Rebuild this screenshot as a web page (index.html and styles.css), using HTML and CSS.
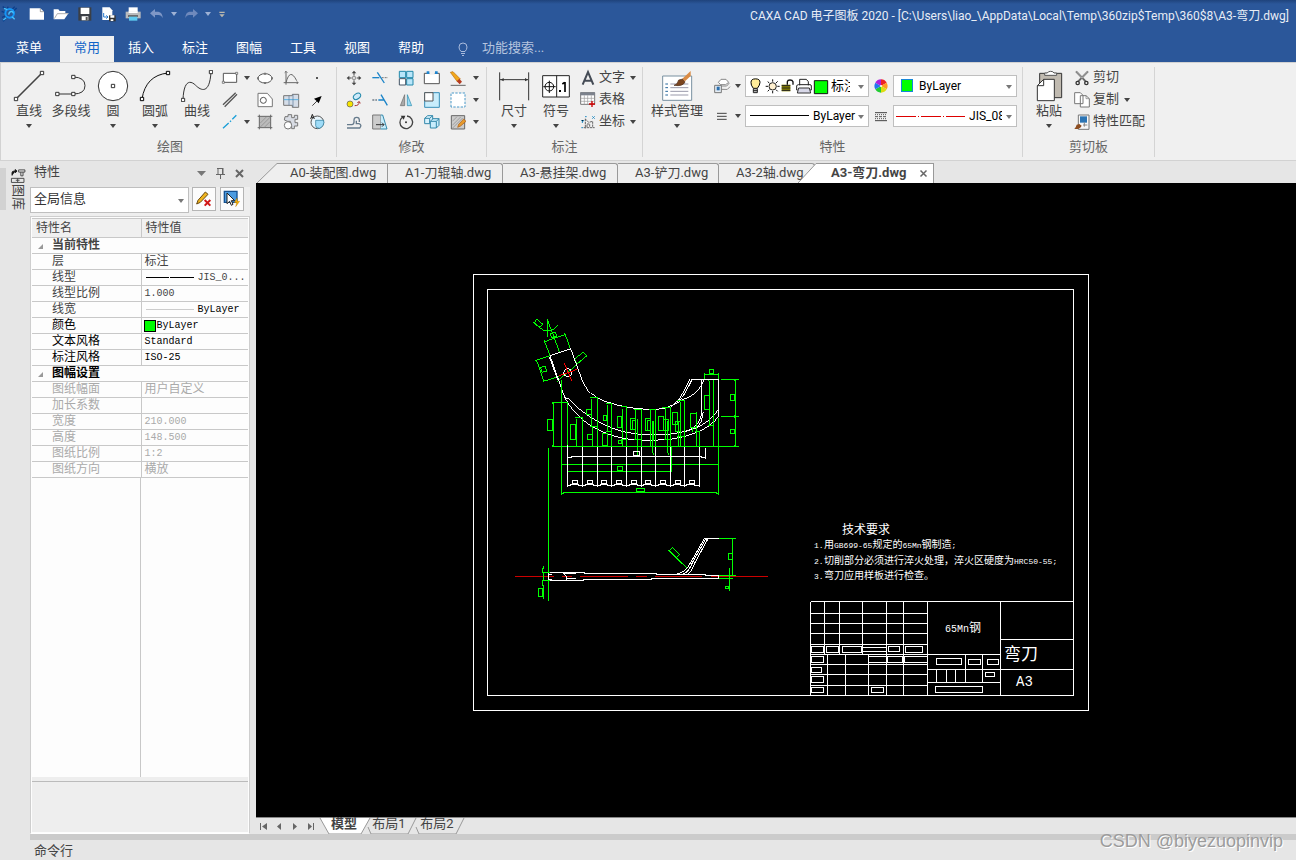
FILE: index.html
```html
<!DOCTYPE html>
<html lang="zh-CN">
<head>
<meta charset="utf-8">
<title>CAXA CAD 电子图板 2020</title>
<link rel="stylesheet" href="styles.css">
</head>
<body>
<header class="header">
  <div class="titlebar">
    <div class="quick">
      <svg class="logo" viewBox="3 15 51 54"><path d="M8 20l14 9M24 20l-3 12M44 20l-8 9M50 24L37 37M5 34l10 4M9 64l12-12M6 52l10-4" stroke="#0a3f8c" stroke-width="4"/><circle cx="29" cy="40" r="13" fill="none" stroke="#1595f5" stroke-width="6"/><path d="M26 44c2-12 12-12 14-4M36 50l8 8M12 25l10 4M10 60l9-7" stroke="#48c4ff" stroke-width="4" fill="none"/></svg>
      <button class="qb" aria-label="新建"><svg class="i18" viewBox="84 15 54 54"><path d="M89 25h32l11 10v24H89z" fill="#fff"/><path d="M121 25v10h11" fill="none" stroke="#777" stroke-width="2"/></svg></button>
      <button class="qb" aria-label="打开"><svg class="i18" viewBox="155 15 54 54"><path d="M160 58V28h14l4 5h17v6h10l-13 19z" fill="#fff"/><path d="M162 56l9-15h32" fill="none" stroke="#888" stroke-width="2"/></svg></button>
      <button class="qb" aria-label="保存"><svg class="i18" viewBox="228 15 54 54"><path d="M235 22h39v40h-39z" fill="#3b3f46"/><path d="M242 23h26v19h-26zM245 49h20v12h-20z" fill="#fff"/><path d="M257 51h6v10h-6z" fill="#555"/></svg></button>
      <button class="qb" aria-label="另存为"><svg class="i18" viewBox="301 15 54 54"><path d="M308 22h22l8 9v29h-30z" fill="#fff"/><path d="M312 39v12h12M320 46l5 5-5 5" stroke="#2a7cd0" stroke-width="3" fill="none"/><path d="M328 46h20v18h-20z" fill="#333"/><path d="M332 46h12v7h-12zM333 58h8v5h-8z" fill="#fff"/></svg></button>
      <button class="qb" aria-label="打印"><svg class="i18" viewBox="372 15 54 54"><path d="M386 22h27v16h-27z" fill="#fff"/><path d="M377 35h45v20h-45z" fill="#b9bbbd"/><path d="M386 34h27v5h-27z" fill="#fff"/><path d="M384 46h30v4h-30z" fill="#444"/><path d="M387 50h25v12h-25z" fill="#5ec9ef"/></svg></button>
      <button class="qb" aria-label="撤销"><svg class="i18" viewBox="444 15 54 54"><path d="M450 40l15-13v8h10q13 2 13 20q-4-10-13-10h-10v8z" fill="#7f97c6"/></svg></button>
      <button class="qa" aria-label="撤销列表"><i class="caret light"></i></button>
      <button class="qb" aria-label="重做"><svg class="i18" viewBox="546 15 54 54"><path d="M594 40l-15-13v8h-11q-12 2-12 20q4-10 12-10h11v8z" fill="#6f89bc"/></svg></button>
      <button class="qa" aria-label="重做列表"><i class="caret light"></i></button>
      <button class="qc" aria-label="自定义"><svg class="i18" viewBox="641 15 54 54"><path d="M660 35h16v4h-16zM660 43h16l-8 9z" fill="#bbb8ad"/></svg></button>
    </div>
    <div class="title">CAXA CAD 电子图板 2020 - [C:\Users\liao_\AppData\Local\Temp\360zip$Temp\360$8\A3-弯刀.dwg]</div>
  </div>
  <nav class="menu">
    <button class="mt first">菜单</button>
    <button class="mt on">常用</button>
    <button class="mt">插入</button>
    <button class="mt">标注</button>
    <button class="mt">图幅</button>
    <button class="mt">工具</button>
    <button class="mt">视图</button>
    <button class="mt">帮助</button>
    <label class="find"><svg class="i14" viewBox="0 0 14 14"><path d="M5 9.500Q3 7.500 3 5a4 4 0 0 1 8 0q0 2.500-2 4.500zM5 11.500h4M6 13.500h2" fill="none" stroke="#a9bbdd"/></svg><input type="text" placeholder="功能搜索..." aria-label="功能搜索"></label>
  </nav>
</header>

<section class="ribbon">
  <div class="group">
    <div class="tools g-draw">
      <button class="big"><svg class="i32" viewBox="39 210 96 96"><path d="M48 297L126 219" stroke="#444" stroke-width="5"/><path d="M43 292h10v10H43zM121 214h10v10h-10z" fill="#fff" stroke="#333" stroke-width="3"/></svg><span>直线</span><i class="caret"></i></button>
      <button class="big"><svg class="i32" viewBox="167 210 96 96"><path d="M174 282H222q35 0 35-25t-35-26" fill="none" stroke="#333" stroke-width="3"/><path d="M169 277h10v10h-10zM217 277h10v10h-10zM217 226h10v10h-10z" fill="#fff" stroke="#333" stroke-width="3"/></svg><span>多段线</span></button>
      <button class="big"><svg class="i32" viewBox="294 210 96 96"><circle cx="342" cy="258" r="44" fill="#fff" stroke="#333" stroke-width="3"/><path d="M337 253h10v10h-10z" fill="#fff" stroke="#333" stroke-width="3"/></svg><span>圆</span><i class="caret"></i></button>
      <button class="big"><svg class="i32" viewBox="420 210 96 96"><path d="M429 297Q440 226 507 219" fill="none" stroke="#111" stroke-width="3"/><path d="M424 292h10v10h-10zM502 214h10v10h-10z" fill="#fff" stroke="#000" stroke-width="3"/></svg><span>圆弧</span><i class="caret"></i></button>
      <button class="big"><svg class="i32" viewBox="546 210 96 96"><path d="M552 300C554 240 574 240 590 256S632 284 636 216" fill="none" stroke="#333" stroke-width="3"/><path d="M547 295h10v10h-10zM631 211h10v10h-10z" fill="#fff" stroke="#333" stroke-width="3"/></svg><span>曲线</span><i class="caret"></i></button>
      <div class="grid4">
        <button aria-label="矩形"><svg class="i18" viewBox="663 207 54 54"><path d="M670 220h40v27h-40z" fill="#fff" stroke="#555" stroke-width="3"/><path d="M667 244h6v6h-6zM707 217h6v6h-6z" fill="#fff" stroke="#555" stroke-width="2"/></svg></button>
        <button aria-label="矩形选项"><i class="caret"></i></button>
        <button aria-label="椭圆"><svg class="i18" viewBox="768 207 54 54"><ellipse cx="795" cy="235" rx="21" ry="14" fill="#fff" stroke="#555" stroke-width="3"/><path d="M771 232h6v6h-6zM813 232h6v6h-6zM792 218h6v6h-6zM792 246h6v6h-6z" fill="#777"/></svg></button>
        <button aria-label="公式曲线"><svg class="i18" viewBox="845 207 54 54"><path d="M857 214v40M850 248h44M857 248q12-46 32-6M853 218l4-4 4 4M889 244l4 4-4 4" fill="none" stroke="#666" stroke-width="3"/></svg></button>
        <button aria-label="点"><svg class="i18" viewBox="924 207 54 54"><path d="M948 231h6v6h-6z" fill="#555"/></svg></button>
        <button aria-label="平行线"><svg class="i18" viewBox="663 273 54 54"><path d="M669 314l38-36M674 320l37-37" stroke="#555" stroke-width="4"/></svg></button>
        <span></span>
        <button aria-label="轮廓"><svg class="i18" viewBox="768 273 54 54"><path d="M774 280h28l15 17v23h-43z" fill="#fff" stroke="#777" stroke-width="3"/><circle cx="790" cy="301" r="9" fill="#fff" stroke="#555" stroke-width="3"/></svg></button>
        <button aria-label="轴"><svg class="i18" viewBox="845 273 54 54"><path d="M850 287h26v-4h19v39h-19v-6h-26z" fill="#d5dde8" stroke="#777" stroke-width="3"/><path d="M850 299h45" stroke="#5ab0e0" stroke-width="3"/><path d="M866 287v29M878 283v38" stroke="#579" stroke-width="2"/></svg></button>
        <button aria-label="箭头"><svg class="i18" viewBox="924 273 54 54"><path d="M937 317l18-18" stroke="#444" stroke-width="3"/><path d="M965 288l-9 22-6-7-8-7z" fill="#000"/></svg></button>
        <button aria-label="中心线"><svg class="i18" viewBox="663 339 54 54"><path d="M669 385l17-16M690 365l3-3M697 358l12-12" stroke="#1a9fd8" stroke-width="4"/></svg></button>
        <button aria-label="中心线选项"><i class="caret"></i></button>
        <button aria-label="剖面线"><svg class="i18" viewBox="768 339 54 54"><path d="M778 349h34v34h-34z" fill="#bbb"/><path d="M778 344v44M812 344v44M773 349h44M773 383h44" stroke="#666" stroke-width="3"/><path d="M780 370l20-20M780 382l31-31M793 382l18-18" stroke="#888" stroke-width="2"/></svg></button>
        <button aria-label="齿轮"><svg class="i18" viewBox="845 339 54 54"><path d="M854 350h9v-6h11v9h8v-7h10v12h-8v10h8v10h-10v8h-8v-8l-4-14h-8l-10-4z" fill="#d8dce4" stroke="#777" stroke-width="3"/><circle cx="863" cy="376" r="11" fill="#fff" stroke="#777" stroke-width="3"/></svg></button>
        <button aria-label="局部放大"><svg class="i18" viewBox="924 339 54 54"><circle cx="952" cy="367" r="19" fill="#e8f5fc" stroke="#555" stroke-width="3"/><path d="M947 361h24a20 20 0 0 1-12 24q-12 0-12-8z" fill="#9fdcf8" stroke="#279" stroke-width="2"/><path d="M932 357l5-14 6 14M934 352h7" fill="none" stroke="#222" stroke-width="3"/></svg></button>
      </div>
    </div>
    <div class="gl">绘图</div>
  </div>

  <div class="group">
    <div class="tools">
      <div class="grid6">
        <button aria-label="平移"><svg class="i18" viewBox="45 27 54 54"><path d="M72 32l7 8H65zM72 76l7-8H65zM50 54l8-7v14zM94 54l-8-7v14z" fill="#444"/><path d="M72 38v9M72 61v8M57 54h8M80 54h8" stroke="#444" stroke-width="3"/><path d="M68 50h8v8h-8z" fill="#fff" stroke="#555" stroke-width="2"/></svg></button>
        <button aria-label="裁剪"><svg class="i18" viewBox="123 27 54 54"><path d="M127 53h21" stroke="#1b84c8" stroke-width="4"/><path d="M155 53h19" stroke="#777" stroke-width="3" stroke-dasharray="6 3"/><path d="M142 37l21 32" stroke="#1b84c8" stroke-width="4"/></svg></button>
        <button aria-label="阵列"><svg class="i18" viewBox="201 27 54 54"><path d="M208 34h19v19h-19zM230 34h19v19h-19zM230 56h19v19h-19z" fill="#b9e6fa" stroke="#28a" stroke-width="3"/><path d="M208 56h19v19h-19z" fill="#fff" stroke="#456" stroke-width="3"/></svg></button>
        <button aria-label="拉伸"><svg class="i18" viewBox="279 27 54 54"><path d="M283 40h45v31h-45z" fill="#fff" stroke="#555" stroke-width="3"/><path d="M298 36h16v8h-16z" fill="#f0f0f0"/><path d="M290 34h8v8h-8zM315 34h8v8h-8z" fill="#1c84cf"/></svg></button>
        <button aria-label="删除"><svg class="i18" viewBox="357 27 54 54"><path d="M361 37l8-2 22 22-9 8z" fill="#f2a71b" stroke="#b96d0a" stroke-width="2"/><path d="M388 56l8 9-7 8-9-9z" fill="#b43c22"/><path d="M362 76h45" stroke="#666" stroke-width="3"/></svg></button>
        <button aria-label="删除选项"><i class="caret"></i></button>
        <button aria-label="平移复制"><svg class="i18" viewBox="45 93 54 54"><circle cx="60" cy="132" r="9" fill="#f7e400" stroke="#555" stroke-width="2"/><ellipse cx="81" cy="109" rx="12" ry="8" transform="rotate(-35 81 109)" fill="#cdeafa" stroke="#28a" stroke-width="3"/><path d="M74 137q14 0 13-11M82 129l5-5 4 6" fill="none" stroke="#a33" stroke-width="3"/></svg></button>
        <button aria-label="延伸"><svg class="i18" viewBox="123 93 54 54"><path d="M127 120h14" stroke="#345" stroke-width="3" stroke-dasharray="6 3"/><path d="M153 104l19 32M145 120h17" stroke="#1b84c8" stroke-width="4"/></svg></button>
        <button aria-label="镜像"><svg class="i18" viewBox="201 93 54 54"><path d="M224 104v33h-13z" fill="#aaa" stroke="#666" stroke-width="2"/><path d="M232 104v33h13z" fill="#9bdcf7" stroke="#28a" stroke-width="2"/></svg></button>
        <button aria-label="缩放"><svg class="i18" viewBox="279 93 54 54"><path d="M284 98h44v44h-44z" fill="#c8edfc" stroke="#388eb8" stroke-width="3"/><path d="M284 98h25v25h-25z" fill="#fff" stroke="#555" stroke-width="3"/></svg></button>
        <button aria-label="打断"><svg class="i18" viewBox="357 93 54 54"><path d="M363 99h42v42h-42z" fill="#fff"/><path d="M363 141V99h42v42z" fill="none" stroke="#4898c8" stroke-width="3" stroke-dasharray="7 4"/></svg></button>
        <button aria-label="打断选项"><i class="caret"></i></button>
        <button aria-label="等距线"><svg class="i18" viewBox="45 159 54 54"><path d="M51 194h14q7-1 7-8v-6q0-8 8-8t8 8v6M51 204h38q8-9-2-13h-8v-9" fill="none" stroke="#667b8c" stroke-width="4"/></svg></button>
        <button aria-label="拉伸区域"><svg class="i18" viewBox="123 159 54 54"><path d="M128 165h24v42h-24z" fill="#ccc" stroke="#777" stroke-width="3"/><path d="M152 165h6l13 42h-19" fill="#c8edfc" stroke="#38a" stroke-width="3"/><path d="M138 194h24M156 188l6 6-6 6" fill="none" stroke="#333" stroke-width="3"/></svg></button>
        <button aria-label="旋转"><svg class="i18" viewBox="201 159 54 54"><path d="M231 168a19 19 0 1 1-14 4" fill="none" stroke="#444" stroke-width="4"/><path d="M212 167l14 0-5 12z" fill="#333"/><circle cx="228" cy="187" r="3" fill="#333"/></svg></button>
        <button aria-label="三维"><svg class="i18" viewBox="279 159 54 54"><path d="M284 175l9-8h15v16l-9 8h-15zM284 175h15v16M299 175l9-8" fill="#d9f2fd" stroke="#38a" stroke-width="3"/><path d="M301 184l8-8h18v20l-8 8h-18zM301 184h18v20M319 184l8-8" fill="#c8edfc" stroke="#38a" stroke-width="3"/></svg></button>
        <button aria-label="填充编辑"><svg class="i18" viewBox="357 159 54 54"><path d="M364 167h40v40h-40z" fill="#ccc" stroke="#666" stroke-width="3"/><path d="M367 184l14-14M367 196l25-25M368 204l30-30" stroke="#888" stroke-width="2"/><path d="M383 202l3-9 15-16 7 7-16 14z" fill="#e69a2b" stroke="#a65b1b" stroke-width="2"/></svg></button>
        <button aria-label="填充选项"><i class="caret"></i></button>
      </div>
    </div>
    <div class="gl">修改</div>
  </div>

  <div class="group">
    <div class="tools g-dim">
      <button class="big"><svg class="i32" viewBox="504 29 96 96"><path d="M509 36v84M596 36v84M510 58h84" stroke="#333" stroke-width="3"/><path d="M512 58l9-5v10zM594 58l-9-5v10z" fill="#333"/></svg><span>尺寸</span><i class="caret"></i></button>
      <button class="big"><svg class="i32" viewBox="630 29 96 96"><path d="M638 46h80v64h-80zM680 46v64" fill="#fff" stroke="#222" stroke-width="3"/><circle cx="658" cy="79" r="13" fill="none" stroke="#111" stroke-width="3"/><path d="M640 79h37M658 61v37" stroke="#111" stroke-width="3"/><path d="M687 89h6v6h-6z"/><path d="M705 65v30M697 71l7-5" stroke="#000" stroke-width="5"/></svg><span>符号</span><i class="caret"></i></button>
      <div class="list">
        <button><svg class="i18" viewBox="747 27 54 54"><path d="M758 74l16-38 16 38M763 62h22" fill="none" stroke="#444b55" stroke-width="6"/></svg><span>文字</span><i class="caret"></i></button>
        <button><svg class="i18" viewBox="747 93 54 54"><path d="M752 98h42v35h-42z" fill="#fff" stroke="#777" stroke-width="3"/><path d="M751 97h44v9h-44z" fill="#7c828c"/><path d="M752 115h42M752 124h42M763 106v27M773 106v27M784 106v27" stroke="#999" stroke-width="2"/><path d="M786 123v18M777 132h18" stroke="#c00" stroke-width="4"/></svg><span>表格</span></button>
        <button><svg class="i18" viewBox="747 159 54 54"><path d="M766 176v29M761 203h33M766 177l10 10 12-3v19M771 201v-9h8v8" fill="none" stroke="#666" stroke-width="3" stroke-dasharray="7 2"/><path d="M754 180l4 5 4-5M757 184v5M765 170h5M787 169l7 7M794 169l-7 7M754 203h5" stroke="#248bc2" stroke-width="3"/></svg><span>坐标</span><i class="caret"></i></button>
      </div>
    </div>
    <div class="gl">标注</div>
  </div>

  <div class="group">
    <div class="tools g-prop">
      <button class="big wide"><svg class="i32" viewBox="63 28 96 96"><path d="M68 46h87v73H68z" fill="#fff" stroke="#7890a0" stroke-width="3"/><path d="M76 70h8M76 81h8M76 92h8M76 103h8" stroke="#28689c" stroke-width="3"/><path d="M91 70h54M91 81h54M91 92h54M91 103h54" stroke="#99a" stroke-width="3"/><path d="M102 74q10-1 14-16l13-3 6 9q-6 14-33 10z" fill="#7b451f" stroke="#4b2b17" stroke-width="2"/><path d="M127 54l25-23v15l-17 16z" fill="#d98b45"/></svg><span>样式管理</span><i class="caret"></i></button>
      <div class="props">
        <button aria-label="图层"><svg class="i18" viewBox="219 53 54 54"><path d="M235 69l8-9h15l8 9-9 7h-15zM238 80h22l8-9M244 90h18l8-8" fill="#fff" stroke="#888" stroke-width="3"/><path d="M224 78h20v22h-20z" fill="#e7eef5" stroke="#777" stroke-width="3"/><path d="M230 82h9v11h-9z" fill="#2b6fad"/></svg></button>
        <button aria-label="图层选项"><i class="caret"></i></button>
        <div class="combo">
          <select class="c-layer" aria-label="图层"><option>标注</option></select>
          <svg class="layericons" viewBox="330 53 237 54"><path d="M340 87q-8-10-7-18a13 10 0 0 1 27 0q0 8-8 18z" fill="#ffec9a" stroke="#000" stroke-width="3"/><path d="M340 88h12v12h-12z" fill="#ccc" stroke="#222" stroke-width="3"/><path d="M340 94h12" stroke="#222" stroke-width="3"/><circle cx="398" cy="81" r="11" fill="#fff0cf" stroke="#222" stroke-width="3"/><path d="M398 60v7M398 95v7M377 81h7M412 81h7M383 67l5 4M408 71l5-5M388 91l-5 5M408 91l5 5" stroke="#111" stroke-width="3"/><path d="M425 76h26v20h-26z" fill="#8c8500"/><path d="M425 79h26M425 86h26M425 93h26" stroke="#222" stroke-width="3"/><path d="M442 76v-9q1-5 8-5t9 5v9" fill="none" stroke="#111" stroke-width="4"/><path d="M479 78V60h20l6 7v11M473 92h-3V80q1-4 5-4h35q4 0 4 4v12h-4" fill="#fff" stroke="#222" stroke-width="3"/><path d="M476 86h32l4 15h-40z" fill="#d8d8e8" stroke="#333" stroke-width="3"/><path d="M523 64h40v39h-40z" fill="#0f0" stroke="#111" stroke-width="3"/></svg>
          <i class="caret mid"></i>
        </div>
        <button aria-label="颜色"><svg class="i18" viewBox="693 53 54 54"><path d="M720 80V60a20 20 0 0 1 17 10z" fill="#e22"/><path d="M720 80l17-10a20 20 0 0 1 0 20z" fill="#f92"/><path d="M720 80l17 10a20 20 0 0 1-17 10z" fill="#dd1"/><path d="M720 80v20a20 20 0 0 1-17-10z" fill="#2c3"/><path d="M720 80l-17 10a20 20 0 0 1 0-20z" fill="#27e"/><path d="M720 80l-17-10a20 20 0 0 1 17-10z" fill="#a2d"/><circle cx="720" cy="80" r="3" fill="#fff"/></svg></button>
        <div class="combo"><select class="c-color" aria-label="颜色"><option>ByLayer</option></select><i class="chip"></i><i class="caret mid"></i></div>
        <button aria-label="线宽"><svg class="i18" viewBox="219 143 54 54"><path d="M231 162h29M231 171h29M231 180h29" stroke="#444" stroke-width="3"/></svg></button>
        <button aria-label="线宽选项"><i class="caret"></i></button>
        <div class="combo"><select class="c-width" aria-label="线宽"><option>ByLayer</option></select><i class="line"></i><i class="caret mid"></i></div>
        <button aria-label="线型"><svg class="i18" viewBox="693 143 54 54"><path d="M702 160h36M702 184h36" stroke="#444" stroke-width="3"/><path d="M702 166h36M702 178h36" stroke="#555" stroke-width="3" stroke-dasharray="3 3"/><path d="M702 172h36" stroke="#555" stroke-width="3" stroke-dasharray="9 3"/></svg></button>
        <div class="combo"><select class="c-type" aria-label="线型"><option>JIS_08_15</option></select><svg class="redline" viewBox="0 0 72 3"><path d="M1 1.500h20M23 1.500h1M26 1.500h20M48 1.500h1M51 1.500h19" stroke="#d00"/></svg><i class="caret mid"></i></div>
      </div>
    </div>
    <div class="gl">特性</div>
  </div>

  <div class="group">
    <div class="tools g-clip">
      <button class="big"><svg class="i32" viewBox="1179 29 96 96"><path d="M1199 39h66v73h-66z" fill="#c0bab0" stroke="#333" stroke-width="3"/><path d="M1214 45v-7h8q2-5 10-5t10 5h8v7z" fill="#fff" stroke="#555" stroke-width="3"/><path d="M1192 121V76l19-19h32v64z" fill="#fff" stroke="#333" stroke-width="3"/><path d="M1192 76h19V57" fill="none" stroke="#333" stroke-width="3"/></svg><span>粘贴</span><i class="caret"></i></button>
      <div class="list">
        <button><svg class="i18" viewBox="1299 27 54 54"><path d="M1308 34l29 30M1344 34l-30 31" stroke="#666" stroke-width="6"/><path d="M1308 34l20 21M1344 34l-20 21" stroke="#ddd" stroke-width="2"/><circle cx="1313" cy="69" r="5" fill="none" stroke="#333" stroke-width="4"/><circle cx="1339" cy="69" r="5" fill="none" stroke="#333" stroke-width="4"/></svg><span>剪切</span></button>
        <button><svg class="i18" viewBox="1299 93 54 54"><path d="M1304 98h17l8 8v25h-25zM1321 107h17l10 9v25h-27z" fill="#fff" stroke="#777" stroke-width="3"/><path d="M1338 107v9h10" fill="none" stroke="#777" stroke-width="2"/></svg><span>复制</span><i class="caret"></i></button>
        <button><svg class="i18" viewBox="1299 159 54 54"><path d="M1315 165h32v43h-32z" fill="#f8f8f8" stroke="#777" stroke-width="3"/><path d="M1320 169h21v19h-21z" fill="#2c75b4"/><path d="M1333 187v13M1329 195h13" stroke="#888" stroke-width="3"/><path d="M1303 207q5-5 7-13l8-2 7 5q-5 12-22 10z" fill="#8d4d20"/></svg><span>特性匹配</span></button>
      </div>
    </div>
    <div class="gl">剪切板</div>
  </div>
</section>

<main class="main">
  <aside class="dock">
    <div class="docktab"></div>
    <button class="lib"><svg class="i16" viewBox="28 24 48 51"><path d="M33 48v-9q0-5 6-5h5M43 29l6 5-6 5z" fill="#111" stroke="#111" stroke-width="3"/><path d="M54 30h20v7H54zM61 37v12h7V37M31 57h40v13H31zM45 63h12M51 57v13" fill="none" stroke="#444" stroke-width="3"/></svg><span>图库</span></button>
  </aside>
  <div class="work">
    <div class="upper">
      <aside class="panel">
        <div class="ptitle"><h2>特性</h2>
          <button aria-label="菜单"><svg class="i16" viewBox="0 0 16 16"><path d="M4 6h9L8.500 11z" fill="#777"/></svg></button>
          <button aria-label="固定"><svg class="i16" viewBox="0 0 16 16"><path d="M6 3v6M11 3v6M5 3.500h6M4 9.500h9M8.500 10v4M10.500 3v6" fill="none" stroke="#666"/></svg></button>
          <button aria-label="关闭"><svg class="i16" viewBox="0 0 16 16"><path d="M5 5l7 7M12 5l-7 7" stroke="#666" stroke-width="2"/></svg></button>
        </div>
        <div class="pcombo">
          <div class="combo"><select class="c-info" aria-label="对象"><option>全局信息</option></select><i class="caret mid"></i></div>
          <button class="pb" aria-label="清除"><svg class="i18" viewBox="585 90 54 54"><path d="M590 132l4-11 22-25 8 7-23 24z" fill="#f0b41c" stroke="#664710" stroke-width="3"/><path d="M614 120l17 17M631 120l-17 17" stroke="#d01515" stroke-width="6"/></svg></button>
          <button class="pb" aria-label="快速选择"><svg class="i18" viewBox="669 90 54 54"><path d="M673 94h38v33h-38z" fill="#4b9be0" stroke="#165292" stroke-width="4"/><path d="M681 99v32l8-7 5 12 5-3-5-11h10z" fill="#fff" stroke="#222" stroke-width="3"/><path d="M711 114l-8 14h7l-3 12 12-16h-7z" fill="#f9b000" stroke="#a86a00" stroke-width="1"/></svg></button>
        </div>
        <div class="pgrid">
          <table>
            <thead><tr><th>特性名</th><th>特性值</th></tr></thead>
            <tbody>
              <tr class="sec"><td colspan="2"><i class="tri"></i>当前特性</td></tr>
              <tr><td>层</td><td>标注</td></tr>
              <tr><td>线型</td><td><span class="val"><i class="dash"></i><span class="mono">JIS_0...</span></span></td></tr>
              <tr><td>线型比例</td><td class="mono">1.000</td></tr>
              <tr><td>线宽</td><td><span class="val"><i class="thin"></i><span class="mono blk">ByLayer</span></span></td></tr>
              <tr class="blk"><td>颜色</td><td><span class="val col"><i class="sw"></i><span class="mono">ByLayer</span></span></td></tr>
              <tr class="blk"><td>文本风格</td><td class="mono">Standard</td></tr>
              <tr class="blk"><td>标注风格</td><td class="mono">ISO-25</td></tr>
              <tr class="sec blk"><td colspan="2"><i class="tri"></i>图幅设置</td></tr>
              <tr class="dim"><td>图纸幅面</td><td>用户自定义</td></tr>
              <tr class="dim"><td>加长系数</td><td></td></tr>
              <tr class="dim"><td>宽度</td><td class="mono">210.000</td></tr>
              <tr class="dim"><td>高度</td><td class="mono">148.500</td></tr>
              <tr class="dim"><td>图纸比例</td><td class="mono">1:2</td></tr>
              <tr class="dim"><td>图纸方向</td><td>横放</td></tr>
            </tbody>
          </table>
          <div class="rest"><span></span></div>
          <div class="desc"></div>
        </div>
      </aside>
      <section class="view">
        <div class="doctabs">
          <button class="dt d1"><svg class="slant" viewBox="0 0 22 20"><path d="M0 20L20 0.500H22V20z" fill="#efefef"/><path d="M0 20L20 .5H22" fill="none" stroke="#999"/></svg>A0-装配图.dwg</button>
          <button class="dt d2">A1-刀辊轴.dwg</button>
          <button class="dt d3">A3-悬挂架.dwg</button>
          <button class="dt d4">A3-铲刀.dwg</button>
          <button class="dt d5">A3-2轴.dwg</button>
          <button class="dt d6"><svg class="slant" viewBox="0 0 22 20"><path d="M0 20L18 0.500H22V20z" fill="#fff"/><path d="M0 20L18 .5H22" fill="none" stroke="#999"/></svg><b>A3-弯刀.dwg</b><svg class="x" viewBox="0 0 9 9"><path d="M1.500 1.500l6 6M7.500 1.500l-6 6" stroke="#666" stroke-width="1.500"/></svg></button>
        </div>
        <svg class="cad" viewBox="256 183 1040 634" fill="none" role="img" aria-label="弯刀图纸">
          <g stroke="#fff" shape-rendering="crispEdges"><path d="M473.500 274.500h615v436h-615zM487.500 289.500h586v406h-586z"/></g>
          <g transform="translate(520 310) scale(.33333)" stroke-width="3" shape-rendering="crispEdges">
            <path stroke="#0f0" d="M74 95L135 74M72 90L90 137M134 68L150 114M103 84L118 126M38 37L72 62H95L113 46M82 28V80M84 34L103 84M50 28L68 42L60 52L43 38zM90 72l15-6 5 12-15 6zM50 152L72 214M46 152L90 137M70 214L116 200M62 172l13-4 5 15-14 4zM112 214L202 136M163 148L190 126L200 138L172 160zM163 148l8 16"/>
            <path stroke="#fff" d="M90 137L152 116L188 215C205 250 235 270 275 280C320 295 390 302 428 296C450 290 470 280 490 268C520 258 540 240 553 208M90 137L124 234L134 262C170 330 230 365 300 383C340 392 400 392 450 388C500 380 560 365 596 320M134 262L148 268C180 305 240 345 300 362C350 376 400 376 450 372C510 365 560 350 596 297M545 310C540 340 525 355 490 366M550 305l-6 30-15 20M510 208L480 265L453 290M518 208L487 262L470 278M512 214l-22 44"/>
            <path d="M89 140L114 208" stroke="#fff" stroke-width="5"/>
            <circle cx="143" cy="188" r="12" stroke="#fff"/>
            <path d="M133 160L155 212M118 197L172 178" stroke="#f00"/>
          </g>
          <g transform="translate(520.5 310.5)" shape-rendering="crispEdges">
            <path stroke="#0f0" d="M41 69V184M28 137V290M31 136H218M31 92H47V136M32 92l1 2V134l-1 2M27 109h5v11h-5zM50 114h5v15h-5zM54 107H62V136M56 108V136M69 87H77V136M71 88V115M69 116H77M72 116V136M66 99h5v5h-5zM67 124h5v5h-5zM83 105h3v5h-3zM85 93H91V136M87 94V120M85 121H91M87 122V136M82 123h5v12h-5z"/>
            <path stroke="#0f0" d="M100 96H106V136M102 98V127M100 129H106M102 129V136M97 106h4v11h-4zM98 130h3v3h-3zM113 99H121V136M115 99V129M110 108h5v11h-5zM112 110h3v9h-3zM117 108V145M113 129h8M128 99H135V136M130 99V136M125 108h5v12h-5zM127 110h3v10h-3zM132 110V140l1 5M133 110v20M141 97H150V162M145 97V129M138 106h5v14h-5zM143 109h5v11h-5zM147 110V140l1 5M143 129h7"/>
            <path stroke="#0f0" d="M156 90H164V136M160 91V136M152 102h5v12h-5zM155 111h5v10h-5zM158 110V136M156 126h8M170 103h6v14h-6zM176 101V136M174 121H179V136M172 117v4M184 85h5v14h-5zM187 69l2 2V115M193 69V136M187 115H193M184 64H198M184 62V69M198 62V69M189 59h4v4h-4zM200 69H218M200 106H218M214 69l1 2V104l-1 2 1 2V134l-1 2M210 84h4v6h-4zM210 119h4v4h-4zM198 107V184M41 154H198M47 161H151V136M41 183h2v-1H196v1h2M97 156h5v4h-5zM116 178h8v3h-8z"/>
            <path stroke="#fff" d="M170 69H198V106M181 69V104M47 134V176M62 136V176M77 136V176M91 136V176M106 136V176M121 136V176M135 136V176M150 136V176M164 136V176M179 136V176M47 147h4v-1H181v1h4M185 137V148M113 141h6v4h-6zM47 175h3v-1h8v1h7v-1h8v1h7v-1h7v1h7v-1h8v1h7v-1h8v1h6v-1h8v1h7v-1h8v1h7v-1h7v1h6v-1h8v1h4M52 170h5v3h-5zM67 170h5v3h-5zM81 170h5v3h-5zM96 170h5v3h-5zM111 170h5v3h-5zM125 170h5v3h-5zM140 170h5v3h-5zM155 170h5v3h-5zM169 170h5v3h-5z"/>
          </g>
          <g transform="translate(505.5 525.5)" shape-rendering="crispEdges">
            <path d="M9 51H48M56 51h10M74 51H122M130 51h11M149 51H196M205 51H262" stroke="#c00"/>
            <path d="M43 47H79V48H151V49H200V50H213V53H146V54H78V55H43zM43 49h3M43 54h3M57 48H70M59 49l2 2v3M61 53H70l1 1M170 49Q180 47 184 39L199 13M177 49Q183 47 187 37L200 14M182 49Q187 45 189 38L202 14H199M199 13H213" stroke="#fff"/>
            <path d="M213 13H230M227 13V50M223 28h4v6h-4zM213 50H230M213 53H227M224 42V65M220 61h3v2h-3zM163 25L182 43M167 22L174 29L171 32L164 25zM38 40V43h-1V47M36 47H44M36 55H44M38 47V55M37 55V60h1V73M33 63h4v8h-4z" stroke="#0f0"/>
          </g>
          <g transform="translate(800.5 515.5)" stroke="#fff" shape-rendering="crispEdges">
            <path d="M10 86H273M10 86V180M24 86V139M39 86V139M62 86V139M86 86V180M103 86V180M127 86V180M200 86V180M10 98H127M10 108H127M10 118H127M10 129H127M10 139H200M27 139V180M45 139V180M68 139V180M10 149H127M10 159H127M10 170H127M127 154H200M127 167H200M165 139V167M182 139V167M136 154V167M146 154V167M155 154V167M200 124H273M200 154H273"/>
            <path d="M11 131h12v6H11zM26 131h12v6H26zM42 131h19v6H42zM62 132h24v4H62zM88 131h11v5H88zM105 131h17v6h-17zM11 141h12v6H11zM68 141h18v6H68zM87 141h15v6H87zM104 141h23v6h-23zM11 152h10v5H11zM11 161h12v6H11zM11 172h12v5H11zM71 172h12v5H71zM136 143h25v6h-25zM168 144h12v5h-12zM187 144h11v5h-11zM185 157h9v4h-9zM135 171h47v6h-47z"/>
          </g>
          <g class="cadtext">
            <text x="842" y="534" class="t12">技术要求</text>
            <text x="814" y="548"><tspan class="m">1.</tspan><tspan x="824">用</tspan><tspan class="m">GB699-65</tspan>规定的<tspan class="m">65Mn</tspan>钢制造<tspan class="m">;</tspan></text>
            <text x="814" y="564"><tspan class="m">2.</tspan><tspan x="824">切削部分必须进行淬火处理，淬火区硬度为</tspan><tspan class="m">HRC50-55;</tspan></text>
            <text x="814" y="579"><tspan class="m">3.</tspan><tspan x="824">弯刀应用样板进行检查。</tspan></text>
            <text x="945" y="632" class="t12"><tspan class="m10">65Mn</tspan>钢</text>
            <text x="1004" y="660" class="t17">弯刀</text>
            <text x="1016" y="686" class="m14">A3</text>
          </g>
        </svg>
        <div class="sheets">
          <button class="nav" aria-label="首页"><svg class="i16" viewBox="0 0 16 16"><path d="M4 5h1v7H4zM11 5v7L6 8.500z" fill="#666"/></svg></button>
          <button class="nav" aria-label="上一页"><svg class="i16" viewBox="0 0 16 16"><path d="M9 5v7L5 8.500z" fill="#666"/></svg></button>
          <button class="nav" aria-label="下一页"><svg class="i16" viewBox="0 0 16 16"><path d="M5 5v7l4-3.500z" fill="#666"/></svg></button>
          <button class="nav" aria-label="末页"><svg class="i16" viewBox="0 0 16 16"><path d="M4 5v7l4-3.500zM9 5h1v7H9z" fill="#666"/></svg></button>
          <button class="st"><svg viewBox="0 0 50 17"><path d="M0 0L9 16H41L50 0" fill="#fff" stroke="#999"/></svg><b>模型</b></button>
          <button class="st s2"><svg viewBox="0 0 50 17"><path d="M3 9L6 16H43L51 0" fill="none" stroke="#999"/></svg><span>布局1</span></button>
          <button class="st"><svg viewBox="0 0 50 17"><path d="M3 9L6 16H43L51 0" fill="none" stroke="#999"/></svg><span>布局2</span></button>
        </div>
      </section>
    </div>
    <footer class="cmd"><span>命令行</span><span class="mark">CSDN @biyezuopinvip</span></footer>
  </div>
</main>
</body>
</html>
```
FILE: styles.css
```css
* { box-sizing: border-box; }
body {
  margin: 0;
  height: 100vh;
  display: flex;
  flex-direction: column;
  background: #e6e6e6;
  color: #444;
  font: 13px/16px Roboto, "Noto Sans CJK SC", sans-serif;
  overflow: hidden;
}
button {
  margin: 0;
  padding: 0;
  border: 0;
  background: none;
  color: inherit;
  font: inherit;
  white-space: nowrap;
}
svg { display: block; flex: none; }
select, input { font: inherit; color: #000; margin: 0; border-radius: 0; }
.i14 { width: 14px; height: 14px; }
.i16 { width: 16px; height: 16px; }
.i18 { width: 18px; height: 18px; }
.i32 { width: 32px; height: 32px; }
.caret {
  display: block;
  flex: none;
  width: 6px;
  height: 4px;
  background: #444;
  clip-path: polygon(0 0, 100% 0, 50% 100%);
}
.caret.light { background: #9fb2d5; }

.header {
  background: linear-gradient(#1f437c, #2b579a 4px);
  color: #fff;
}
.titlebar { display: flex; justify-content: space-between; height: 36px; }
.quick { display: flex; align-items: center; height: 28px; }
.logo { width: 17px; height: 18px; margin: 0 7px 0 1px; }
.qb { width: 24px; height: 24px; display: grid; place-items: center; }
.qa, .qc { width: 10px; height: 24px; display: grid; place-items: center; }
.qc { width: 18px; }
.title { font-size: 12px; line-height: 32px; padding-right: 7px; white-space: nowrap; color: #e8edf6; }
.menu { display: flex; height: 26px; }
.mt { width: 54px; padding-bottom: 3px; }
.mt.first { width: 58px; margin-right: 2px; }
.mt.on { background: #f0f0f0; color: #1065c8; }
.find { display: flex; align-items: center; gap: 12px; margin-left: 18px; }
.find input { width: 120px; padding: 0 0 2px; border: 0; background: none; color: #fff; }
.find input::placeholder { color: #b5c4df; opacity: 1; }

.ribbon {
  display: flex;
  padding: 4px 0 3px 3px;
  background: #f0f0f0;
  border: 1px solid #d2d2d2;
  border-width: 1px 0 1px 1px;
}
.group {
  display: flex;
  flex-direction: column;
  padding: 0 4px;
  border-right: 1px solid #d4d4d4;
}
.tools { display: flex; height: 70px; }
.gl { text-align: center; line-height: 20px; color: #666; }
.big {
  width: 42px;
  display: flex;
  flex-direction: column;
  align-items: center;
  padding-top: 3px;
}
.big.wide { width: 60px; }
.big span { margin: 1px 0 5px; }
.grid4 button, .grid6 button, .props button { display: grid; place-items: center; }
.grid4 {
  display: grid;
  grid-template-columns: 24px 10px 26px 26px 26px;
  grid-auto-rows: 22px;
  margin-right: 2px;
}
.grid6 {
  display: grid;
  grid-template-columns: repeat(5, 26px) 10px;
  grid-auto-rows: 22px;
  margin-right: 1px;
}
.g-dim { padding: 0 2px; }
.list { display: grid; grid-auto-rows: 22px; margin-left: 2px; justify-content: start; }
.list button { display: flex; align-items: center; }
.list span { margin: 0 5px 0 2px; padding-bottom: 2px; }
.g-prop .big { margin-right: 6px; }
.props {
  display: grid;
  grid-template-columns: 18px 14px 124px 24px 124px;
  grid-auto-rows: 30px;
  align-items: center;
  margin: 4px 1px 0 0;
}
.combo { position: relative; }
.combo select {
  appearance: none;
  display: block;
  width: 100%;
  height: 22px;
  padding: 0 16px 0 8px;
  border: 1px solid #bfbfbf;
  background: #fff;
  font-size: 12px;
}
.combo .mid { position: absolute; right: 5px; top: 50%; margin-top: -1px; background: #777; }
.combo .c-layer { padding-left: 85px; padding-right: 18px; font-size: 13px; text-overflow: clip; }
.combo .c-color { padding-left: 25px; }
.combo .c-width { padding-left: 67px; padding-right: 12px; }
.combo .c-type { padding-left: 75px; padding-right: 14px; }
.layericons { position: absolute; left: 5px; top: 2px; width: 79px; height: 18px; }
.chip { position: absolute; left: 8px; top: 4px; width: 12px; height: 13px; background: #0f0; border: 1px solid #1686d9; }
.line { position: absolute; left: 5px; top: 10px; width: 59px; height: 1px; background: #000; }
.redline { position: absolute; left: 2px; top: 10px; width: 72px; height: 3px; }
.g-clip { padding-left: 1px; }
.g-clip .list { margin-left: 3px; }

.main { flex: 1; display: flex; min-height: 0; }
.dock { width: 30px; display: flex; align-items: flex-start; gap: 4px; padding-top: 7px; }
.docktab { width: 6px; height: 42px; background: #d2d2d2; }
.lib { display: flex; flex-direction: column; align-items: center; }
.lib span { writing-mode: vertical-rl; text-orientation: sideways; line-height: 14px; }
.work { flex: 1; display: flex; flex-direction: column; min-width: 0; }
.upper { flex: 1; display: flex; min-height: 0; }
.panel {
  width: 220px;
  display: flex;
  flex-direction: column;
  margin-right: 6px;
}
.ptitle { display: flex; align-items: center; height: 26px; padding: 0 2px 3px 4px; }
.ptitle h2 { margin: 0 auto 0 0; padding-bottom: 2px; font: inherit; }
.ptitle button { width: 19px; display: grid; place-items: center; }
.pcombo { display: flex; gap: 3px; height: 29px; align-items: flex-start; background: #eee; }
.pcombo .combo { width: 159px; }
.combo .c-info { height: 26px; padding-left: 3px; padding-bottom: 2px; font-size: 13px; color: #333; }
.pb { width: 24px; height: 24px; border: 1px solid #b5b5b5; background: #fcfcfc; display: grid; place-items: center; }
.pb + .pb { margin-left: 1px; }
.pgrid {
  flex: 1;
  display: flex;
  flex-direction: column;
  padding: 1px;
  border: 1px solid #cecece;
  border-bottom-color: #fff;
  background: #fdfdfd;
}
.pgrid table { width: 100%; border-collapse: collapse; table-layout: fixed; font-size: 12px; line-height: 15px; }
.pgrid th { height: 19px; padding: 0 0 0 4px; text-align: left; font-weight: 400; background: #f0f0f0; border: 1px solid #c8c8c8; border-left: 0; }
.pgrid th + th, .pgrid td + td { border-right: 0; }
.pgrid th:first-child { width: 109px; }
.pgrid td { height: 16px; padding: 0 0 0 20px; border: 1px solid #c8c8c8; border-left: 0; white-space: nowrap; }
.pgrid td + td { padding-left: 3px; }
.pgrid .sec td { font-weight: 700; border-right: 0; }
.pgrid .blk { color: #000; }
.pgrid .dim { color: #aaa; }
.mono { font-family: "Liberation Mono", monospace; font-size: 10px; }
.tri { display: inline-block; width: 5px; height: 5px; margin: 0 9px 0 -14px; background: #999; clip-path: polygon(100% 0, 100% 100%, 0 100%); }
.val { display: flex; align-items: center; gap: 4px; }
.val i { display: block; flex: none; }
.dash { width: 48px; height: 1px; margin-left: 1px; background: linear-gradient(90deg, #000 47%, #fff 47% 51%, #000 51%); }
.thin { width: 48px; height: 1px; margin-left: 1px; background: #ccc; }
.col { gap: 1px; margin-left: -1px; }
.sw { width: 12px; height: 12px; border: 1px solid #000; background: #0f0; }
.rest { flex: 1; background: #fdfdfd; }
.rest span { display: block; width: 109px; height: 100%; border-right: 1px solid #c8c8c8; }
.desc { height: 55px; background: #eee; border-top: 4px solid #eee; box-shadow: inset 0 1px #bbb; }

.view { flex: 1; display: flex; flex-direction: column; min-width: 0; }
.doctabs { display: flex; height: 22px; padding: 2px 0 0 1px; }
.dt {
  position: relative;
  height: 20px;
  line-height: 16px;
  padding: 0 13px 1px 17px;
  text-align: left;
  background: #efefef;
  border: 1px solid #999;
  border-width: 1px 1px 0 0;
  border-radius: 0 3px 0 0;
}
.slant { position: absolute; left: 0; top: -1px; width: 22px; height: 20px; }
.d1, .d6 { border-left: 0; border-image: linear-gradient(90deg, transparent 21px, #999 21px) 1; }
.d1 { width: 131px; padding-left: 33px; background: linear-gradient(#efefef, #efefef) 22px 0 no-repeat; }
.d2, .d3 { width: 115px; }
.d4 { width: 101px; }
.d5 { width: 96px; }
.d6 { width: 136px; margin-left: -17px; padding: 0 5px 1px 33px; display: flex; align-items: center; justify-content: space-between; background: linear-gradient(#fff, #fff) 22px 0 no-repeat; }
.x { width: 9px; height: 9px; }
.cad { flex: 1; min-height: 0; width: 100%; background: #000; }
.cadtext { fill: #fff; font: 10px "Noto Sans CJK SC", sans-serif; }
.t12 { font-size: 12px; }
.t17 { font-size: 17px; }
.m { font-family: "Liberation Mono", monospace; font-size: 8px; }
.m10 { font-family: "Liberation Mono", monospace; font-size: 10px; }
.m14 { font-family: "Liberation Mono", monospace; font-size: 14px; }
.sheets { display: flex; height: 17px; border-top: 1px solid #888; }
.nav { width: 16px; }
.st { position: relative; width: 48px; line-height: 12px; padding-bottom: 4px; }
.st svg { position: absolute; left: 0; top: 0; width: 50px; height: 17px; overflow: visible; }
.st b, .st span { position: relative; display: block; }
.s2 { margin-left: -3px; }
.cmd { position: relative; height: 26px; border-top: 6px solid #cbcbcb; padding: 3px 4px; }
.mark {
  position: absolute;
  right: 13px;
  bottom: 9px;
  color: #9c9c9c;
  font: 18px/20px "Liberation Sans", sans-serif;
  text-shadow: 1px 1px #fff;
}
```
